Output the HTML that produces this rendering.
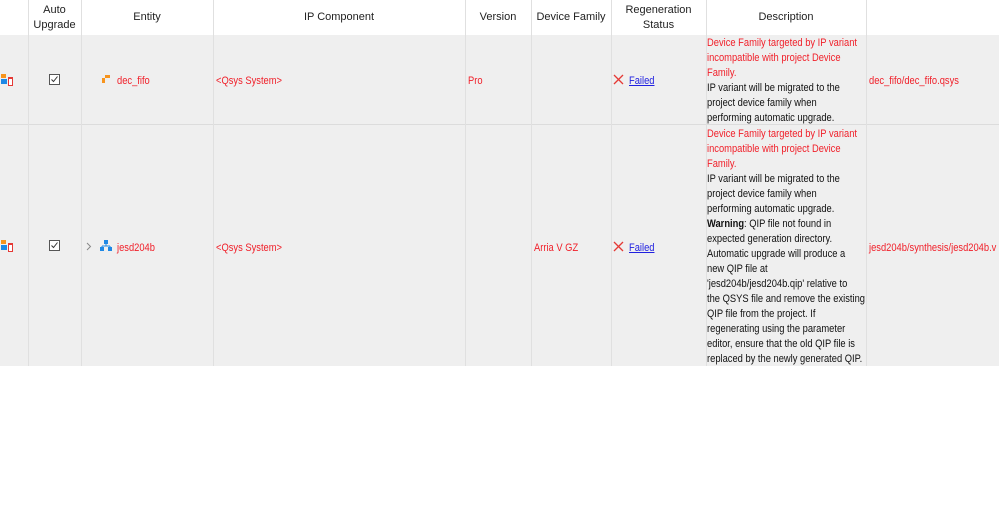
<!DOCTYPE html>
<html><head><meta charset="utf-8"><style>
html,body{margin:0;padding:0;background:#fff;width:999px;height:517px;overflow:hidden;font-family:"Liberation Sans",sans-serif;font-size:11px;color:#111}
.a{position:absolute}
.row{position:absolute;left:0;width:999px;background:#efefef;border-bottom:1px solid #dcdcdc}
.vl{position:absolute;top:0;width:1px;background:#e0e0e0;height:366px}
.h{position:absolute;top:0;height:35px;display:flex;align-items:center;justify-content:center;text-align:center;line-height:15px;color:#222}
.t{position:absolute;white-space:nowrap;transform:scaleX(.85);transform-origin:left top;line-height:15px}
.red{color:#f0202a}
.lk{color:#2020e0;text-decoration:underline}
.cb{position:absolute;width:9px;height:9px;border:1px solid #555;background:#fff}
</style></head><body>
<div class="row" style="top:35px;height:89px"></div>
<div class="row" style="top:125px;height:241px;border:none"></div>
<div class="vl" style="left:28px"></div><div class="vl" style="left:81px"></div><div class="vl" style="left:213px"></div><div class="vl" style="left:465px"></div><div class="vl" style="left:531px"></div><div class="vl" style="left:611px"></div><div class="vl" style="left:706px"></div><div class="vl" style="left:866px"></div>
<div class="h" style="left:28px;width:53px"><span class="t" style="position:static;transform:none">Auto<br>Upgrade</span></div>
<div class="h" style="left:81px;width:132px">Entity</div>
<div class="h" style="left:213px;width:252px">IP Component</div>
<div class="h" style="left:465px;width:66px">Version</div>
<div class="h" style="left:531px;width:80px">Device Family</div>
<div class="h" style="left:611px;width:95px">Regeneration<br>Status</div>
<div class="h" style="left:706px;width:160px">Description</div>

<!-- row1 -->
<svg class="a" style="left:0;top:73px" width="14" height="14"><rect x="1" y="1" width="5" height="4" fill="#f7941d"/><rect x="1" y="6" width="6" height="5" fill="#1e88e5"/><rect x="8" y="4" width="5" height="9" fill="#e53935"/><rect x="9" y="6" width="3" height="6" fill="#fff"/></svg>
<div class="cb" style="left:49px;top:74px"></div><svg class="a" style="left:50px;top:75px" width="9" height="9"><path d="M1.5 4.5l2 2 4-5" stroke="#333" fill="none"/></svg>
<svg class="a" style="left:102px;top:75px" width="8" height="8"><path d="M0 3h3V0h5v3H3v5H0z" fill="#f7941d"/></svg>
<div class="t red" style="left:117px;top:74px">dec_fifo</div>
<div class="t red" style="left:216px;top:74px">&lt;Qsys System&gt;</div>
<div class="t red" style="left:468px;top:74px">Pro</div>
<svg class="a" style="left:613px;top:74px" width="11" height="11"><path d="M1 1l9 9M10 1l-9 9" stroke="#e53935" stroke-width="1.3"/></svg>
<div class="t lk" style="left:629px;top:74px">Failed</div>
<div class="t" style="left:707px;top:36px"><span class="red">Device Family targeted by IP variant<br>incompatible with project Device<br>Family.</span><br>IP variant will be migrated to the<br>project device family when<br>performing automatic upgrade.</div>
<div class="t red" style="left:869px;top:74px">dec_fifo/dec_fifo.qsys</div>

<!-- row2 -->
<svg class="a" style="left:0;top:239px" width="14" height="14"><rect x="1" y="1" width="5" height="4" fill="#f7941d"/><rect x="1" y="6" width="6" height="5" fill="#1e88e5"/><rect x="8" y="4" width="5" height="9" fill="#e53935"/><rect x="9" y="6" width="3" height="6" fill="#fff"/></svg>
<div class="cb" style="left:49px;top:240px"></div><svg class="a" style="left:50px;top:241px" width="9" height="9"><path d="M1.5 4.5l2 2 4-5" stroke="#333" fill="none"/></svg>
<svg class="a" style="left:86px;top:242px" width="6" height="9"><path d="M1 1l3.5 3.5L1 8" stroke="#888" fill="none"/></svg>
<svg class="a" style="left:100px;top:240px" width="12" height="11"><rect x="4" y="0" width="4" height="4" fill="#1e88e5"/><path d="M6 4v2M2 6h8M2 6v1M10 6v1" stroke="#1e88e5"/><rect x="0" y="7" width="4" height="4" fill="#1e88e5"/><rect x="8" y="7" width="4" height="4" fill="#1e88e5"/></svg>
<div class="t red" style="left:117px;top:241px">jesd204b</div>
<div class="t red" style="left:216px;top:241px">&lt;Qsys System&gt;</div>
<div class="t red" style="left:534px;top:241px">Arria V GZ</div>
<svg class="a" style="left:613px;top:241px" width="11" height="11"><path d="M1 1l9 9M10 1l-9 9" stroke="#e53935" stroke-width="1.3"/></svg>
<div class="t lk" style="left:629px;top:241px">Failed</div>
<div class="t" style="left:707px;top:127px"><span class="red">Device Family targeted by IP variant<br>incompatible with project Device<br>Family.</span><br>IP variant will be migrated to the<br>project device family when<br>performing automatic upgrade.<br><b>Warning</b>: QIP file not found in<br>expected generation directory.<br>Automatic upgrade will produce a<br>new QIP file at<br>'jesd204b/jesd204b.qip' relative to<br>the QSYS file and remove the existing<br>QIP file from the project. If<br>regenerating using the parameter<br>editor, ensure that the old QIP file is<br>replaced by the newly generated QIP.</div>
<div class="t red" style="left:869px;top:241px">jesd204b/synthesis/jesd204b.v</div>
<div class="a" style="left:0;top:366px;width:999px;height:151px;background:#fff"></div>
</body></html>
